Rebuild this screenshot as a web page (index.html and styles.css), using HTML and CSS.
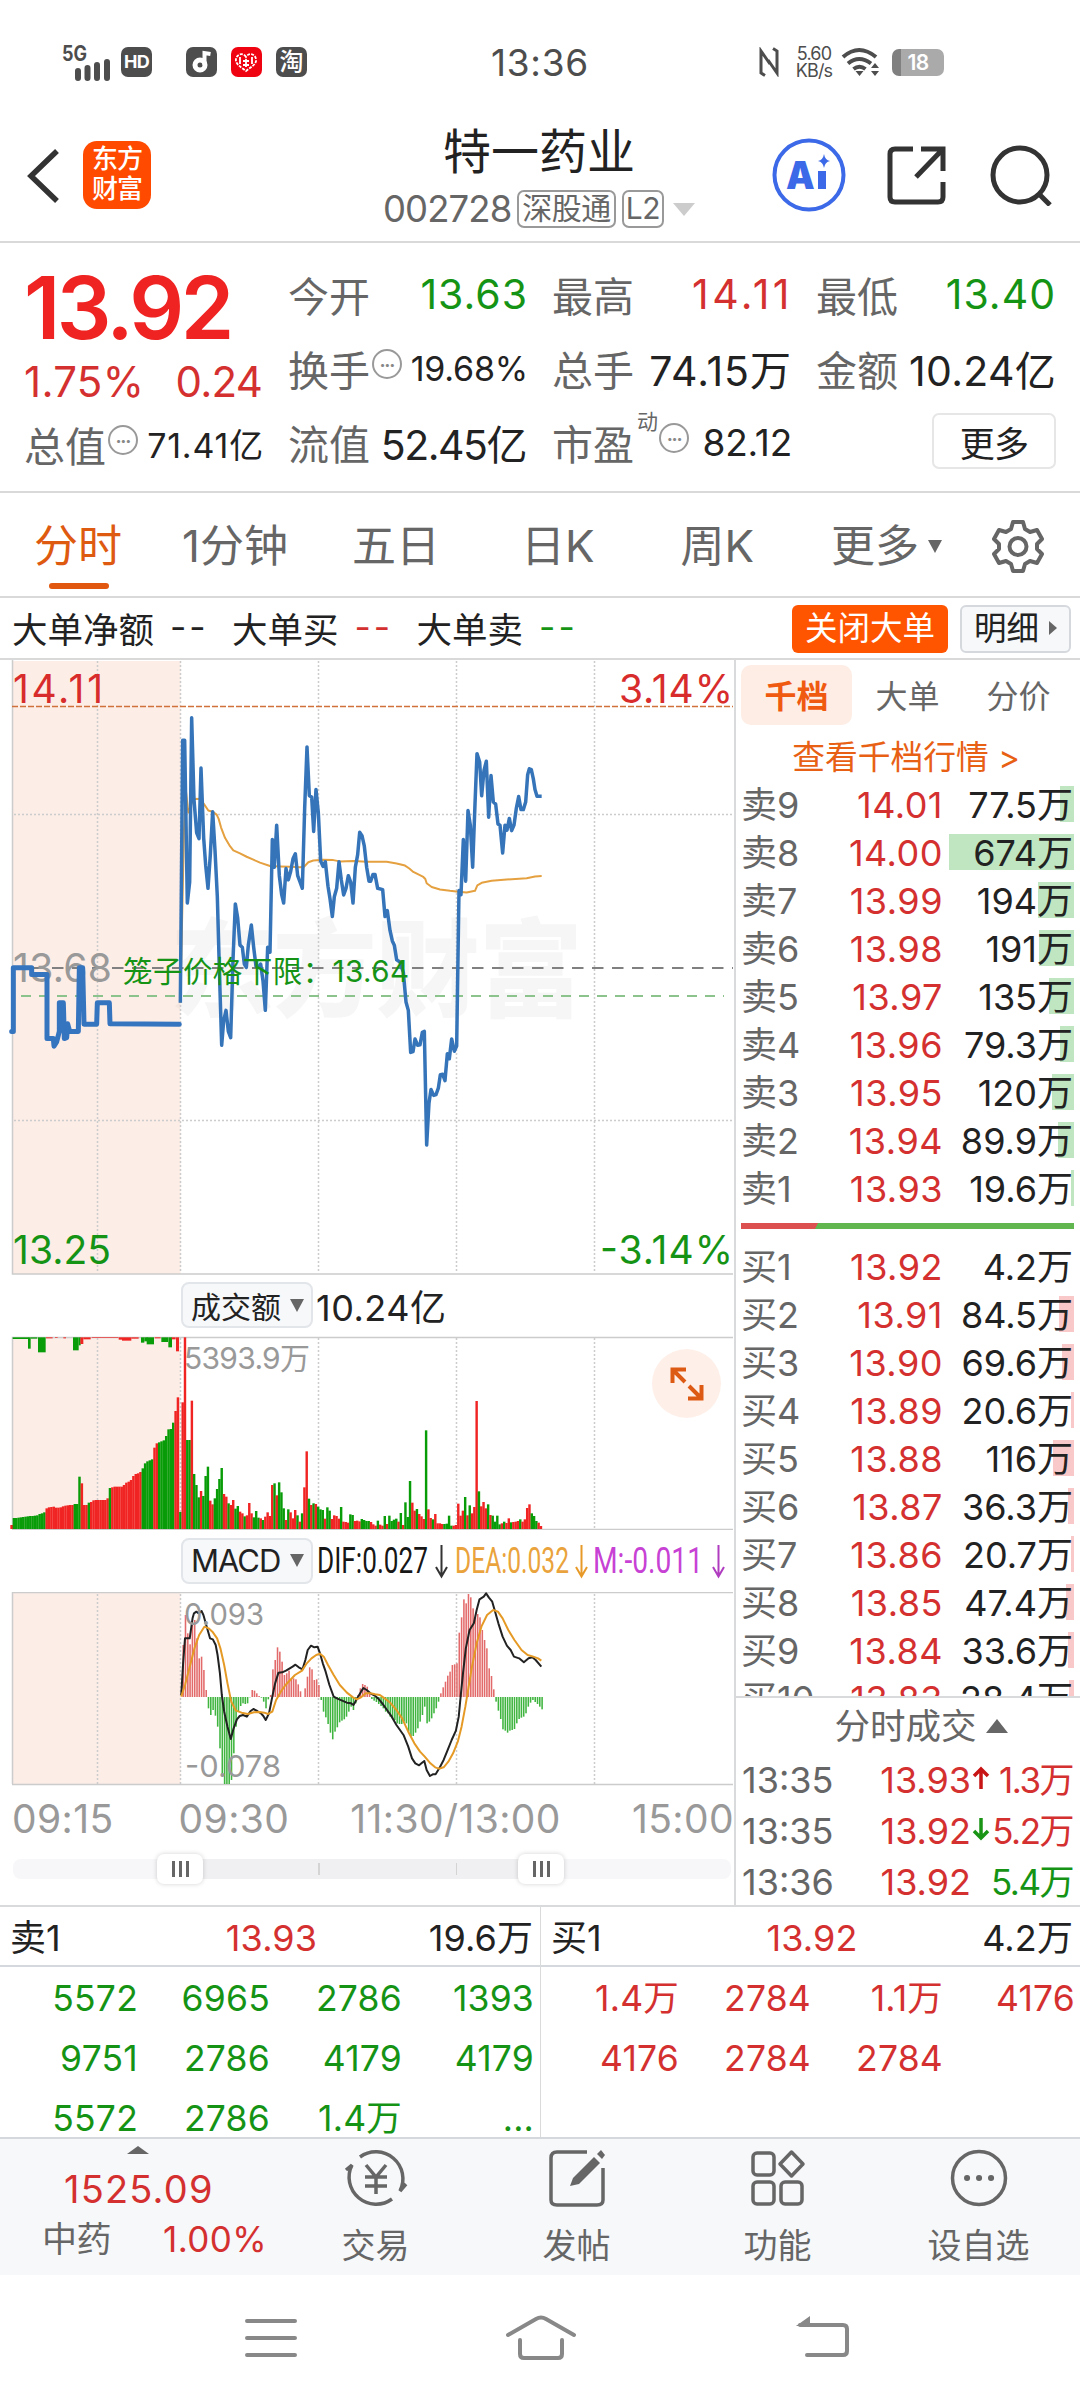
FILE: index.html
```html
<!DOCTYPE html>
<html lang="zh-CN">
<head>
  <meta charset="UTF-8" />
  <meta name="viewport" content="width=device-width, initial-scale=1.0"/>
  <title>特一药业 002728</title>
  <link rel="stylesheet" href="styles.css">
</head>
<body>
  <div class="status">
    <div class="status-left">
      <svg class="signal" width="50" height="36" viewBox="0 0 50 36">
        <text x="0" y="18" textLength="25" lengthAdjust="spacingAndGlyphs">5G</text>
        <path d="M16 35v-7M25.500 35v-10M35 35v-13M45 35v-16" stroke="#4d4d4d" stroke-width="6" stroke-linecap="round"/>
      </svg>
      <span class="badge hd">HD</span>
      <span class="badge music">
        <svg width="30" height="30" viewBox="0 0 30 30"><circle cx="14" cy="18" r="5" fill="none" stroke="#fff" stroke-width="5"/><path d="M18.500 18V6l6 1" fill="none" stroke="#fff" stroke-width="4"/></svg>
      </span>
      <span class="badge red">
        <svg width="30" height="30" viewBox="0 0 30 30" fill="none" stroke="#fff" stroke-width="1.800"><path d="M15 10c-3-5-9-3-10 2s5 8 10 12c5-4 11-7 10-12s-7-7-10-2z" stroke-dasharray="3 1.200"/><path d="M9 10v7M21 10v7M12 14h6M12 18h6M15 12v8"/></svg>
      </span>
      <span class="badge tao">淘</span>
    </div>
    <div class="clock">13:36</div>
    <div class="status-right">
      <svg width="20" height="30" viewBox="0 0 20 30" fill="none" stroke="#4d4d4d" stroke-width="3"><path d="M6 28.500 2 26V4l9 13M14 1.500 18 4v22L9 13"/></svg>
      <div class="speed"><span>5.60</span><span>KB/s</span></div>
      <svg width="40" height="30" viewBox="0 0 40 30" fill="none" stroke="#4d4d4d" stroke-width="4"><path d="M2 10Q18-4 35 10M7 16.500q11-9 23 0M12.500 22q6-4.500 12 0"/><path d="M14.500 24h8l-4 5zM30 21h8l-4-5zM30 24h8l-4 5z" fill="#4d4d4d" stroke="none"/></svg>
      <span class="battery">18</span>
    </div>
  </div>

  <div class="header">
    <div class="header-left">
      <svg width="34" height="54" viewBox="0 0 34 54"><path d="M31 2 5 27l26 25" fill="none" stroke="#333" stroke-width="5.500"/></svg>
      <div class="logo">东方<br>财富</div>
    </div>
    <div class="title">
      <h1>特一药业</h1>
      <div class="code"><span>002728</span><i>深股通</i><i>L2</i><b class="tri-down"></b></div>
    </div>
    <div class="header-right">
      <svg width="74" height="74" viewBox="0 0 74 74"><circle cx="37" cy="37" r="34.500" fill="none" stroke="#3c69e7" stroke-width="4"/><text class="ai" x="14" y="51" textLength="28" lengthAdjust="spacingAndGlyphs">A</text><path d="M50 33v18" stroke="#3c69e7" stroke-width="8"/><path d="M52 16q1 6 6 7-5 1-6 7-1-6-6-7 5-1 6-7z" fill="#3c69e7"/></svg>
      <svg width="60" height="60" viewBox="0 0 60 60" fill="none" stroke="#333" stroke-width="5"><path d="M26 4H8q-5 0-5 5v43q0 5 5 5h43q5 0 5-5V37M34 4h22v22M56 4 29 32"/></svg>
      <svg width="62" height="62" viewBox="0 0 62 62" fill="none" stroke="#333" stroke-width="5"><circle cx="30" cy="31" r="27"/><path d="m48 49 12 12"/></svg>
    </div>
  </div>

  <div class="quote">
    <div class="quote-main">
      <div class="price red-t">13.92</div>
      <div class="change red-t"><span>1.75%</span><span>0.24</span></div>
      <div class="cell total"><label>总值</label><em class="info">•••</em><span class="small">71.41亿</span></div>
    </div>
    <div class="quote-col">
      <div class="cell"><label>今开</label><span class="green-t">13.63</span></div>
      <div class="cell"><label>换手</label><em class="info">•••</em><span class="small">19.68%</span></div>
      <div class="cell"><label>流值</label><span class="tight">52.45亿</span></div>
    </div>
    <div class="quote-col">
      <div class="cell"><label>最高</label><span class="red-t wide">14.11</span></div>
      <div class="cell"><label>总手</label><span>74.15万</span></div>
      <div class="cell"><label>市盈</label><sup>动</sup><em class="info">•••</em><span class="small mid">82.12</span></div>
    </div>
    <div class="quote-col">
      <div class="cell"><label>最低</label><span class="green-t">13.40</span></div>
      <div class="cell"><label>金额</label><span class="fit">10.24亿</span></div>
      <div class="cell"><button class="more-btn">更多</button></div>
    </div>
  </div>

  <div class="tabs">
    <div class="tab active">分时</div>
    <div class="tab">1分钟</div>
    <div class="tab">五日</div>
    <div class="tab">日K</div>
    <div class="tab">周K</div>
    <div class="tab">更多<b class="tri-down"></b></div>
    <svg class="gear" width="54" height="54" viewBox="0 0 54 54" fill="none" stroke="#666" stroke-width="4"><path d="M22 3h10l2 7 5 3 7-2 5 9-5 5v5l5 5-5 9-7-2-5 3-2 7H22l-2-7-5-3-7 2-5-9 5-5v-5l-5-5 5-9 7 2 5-3z" stroke-linejoin="round"/><circle cx="27" cy="27.500" r="8.500"/></svg>
  </div>

  <div class="bigorder">
    <span>大单净额</span><span class="dash">--</span>
    <span>大单买</span><span class="dash red-t">--</span>
    <span>大单卖</span><span class="dash green-t">--</span>
    <button class="close-big">关闭大单</button>
    <button class="detail">明细<b class="tri-right"></b></button>
  </div>

  <div class="main">
    <div class="charts">
      <svg class="price-chart" width="734" height="615" viewBox="0 660 734 615">
        <rect x="12.500" y="661" width="168" height="613" fill="#fdede7"/>
        <text class="watermark" x="170" y="1008" textLength="412" lengthAdjust="spacingAndGlyphs">东方财富</text>
        <path class="grid" d="M97.500 661V1273M180.500 661V1273M318.500 661V1273M456.500 661V1273M594.500 661V1273M14 814.500H733M14 1120.500H733"/>
        <path class="frame" d="M12.500 660V1274H733"/>
        <path d="M12 706.500H733" stroke="#d0703a" stroke-width="1.500" stroke-dasharray="6 2"/>
        <path d="M12 968H733" stroke="#808080" stroke-width="2" stroke-dasharray="11.500 8.500"/>
        <path d="M21 996H724" stroke="#8cc28c" stroke-width="2" stroke-dasharray="10 8"/>
        <text class="axis-t gray" x="13" y="982" textLength="99">13.68</text>
        <g transform="translate(0 640) scale(.33333 .42087)">
          <polyline class="avg" points="541,862 552,450 558,360 565,410 572,395 580,377 600,378 612,390 625,405 638,408 650,415 656,425 663,445 675,470 690,490 700,500 720,507 740,515 760,522 780,529 810,537 840,538 870,539 900,540 912,539 925,528 940,524 970,522 1000,523 1020,526 1060,525 1100,527 1160,527 1190,531 1215,536 1228,543 1240,551 1270,563 1276,568 1280,578 1295,587 1320,593 1350,596 1375,598 1400,600 1425,596 1432,583 1445,577 1475,572 1520,569 1580,566 1605,562 1625,561"/>
          <polyline class="pre" points="35,930 40,930 40,779 95,779 95,795 141,795 141,947 160,947 162,965 170,955 178,930 178,862 190,862 193,947 200,945 203,912 209,930 235,930 238,779 248,779 252,913 290,913 292,862 328,862 330,912 538,913"/>
          <polyline class="last" points="541,862 548,238 554,238 562,625 569,575 575,185 582,380 590,458 597,472 603,304 611,470 617,535 624,590 631,510 638,408 645,500 652,610 658,780 665,963 671,905 678,880 685,930 692,945 699,760 706,627 713,660 720,725 727,730 733,770 739,778 745,725 754,677 761,730 768,775 775,778 782,770 789,810 796,880 803,730 810,742 817,474 823,540 830,440 838,560 845,605 851,625 858,543 865,570 872,550 879,520 886,508 893,560 900,575 907,590 914,400 921,254 928,370 935,373 941,455 948,355 955,410 962,525 969,538 976,527 984,585 990,615 997,657 1003,610 1010,590 1017,527 1024,570 1031,606 1038,590 1045,560 1052,575 1059,625 1066,540 1073,510 1079,457 1086,465 1093,490 1100,540 1107,573 1112,573 1119,557 1125,557 1133,590 1148,593 1155,657 1162,643 1170,690 1177,715 1183,725 1190,760 1200,765 1210,790 1218,860 1225,880 1232,980 1239,978 1245,948 1253,963 1260,962 1267,932 1273,930 1280,1200 1287,1100 1293,1068 1301,1082 1308,1080 1315,1065 1321,1033 1328,1032 1335,1047 1342,983 1348,995 1355,948 1363,977 1370,965 1377,595 1383,605 1390,474 1397,573 1404,405 1411,440 1418,540 1425,390 1431,270 1439,290 1445,370 1452,310 1459,288 1466,421 1473,322 1480,385 1487,390 1494,437 1500,440 1508,506 1515,440 1521,452 1528,424 1535,453 1542,440 1549,400 1556,372 1563,403 1570,403 1577,385 1583,320 1588,306 1594,308 1600,330 1605,355 1611,371 1625,371"/>
        </g>
        <text class="limit" x="123" y="982" textLength="286">笼子价格下限：13.64</text>
        <text class="axis-t up" x="13" y="703" textLength="90">14.11</text>
        <text class="axis-t up" x="619" y="703" textLength="114">3.14%</text>
        <text class="axis-t down" x="13" y="1264" textLength="98">13.25</text>
        <text class="axis-t down" x="600" y="1264" textLength="133">-3.14%</text>
      </svg>

      <div class="legend">
        <span class="chip">成交额<b class="tri-down"></b></span>
        <span class="legend-val">10.24亿</span>
      </div>

      <div class="vol-wrap">
        <svg width="734" height="194" viewBox="0 1336 734 194">
          <rect x="12.500" y="1337" width="168" height="192" fill="#fdede7"/>
          <path class="grid" d="M97.500 1338V1529M180.500 1338V1529M318.500 1338V1529M456.500 1338V1529M594.500 1338V1529"/>
          <path class="frame" d="M12.500 1529V1337.500H733M12 1529.500H733"/>
          <text class="scale-t" x="184" y="1369" textLength="126">5393.9万</text>
          <g id="volume" transform="translate(0 1260) scale(.33333)"></g>
        </svg>
        <span class="expand">
          <svg width="36" height="36" viewBox="0 0 36 36" fill="none" stroke="#dd5a14" stroke-width="4"><path d="M17 3.500H3.500V17M4 4l12 12M19 32.500h13.500V19M32 32 20 20"/></svg>
        </span>
      </div>

      <div class="legend macd">
        <span class="chip">MACD<b class="tri-down"></b></span>
        <svg width="418" height="48" viewBox="316 1537 418 48">
          <g class="macd-t">
            <text x="317" y="1573" textLength="111" lengthAdjust="spacingAndGlyphs">DIF:0.027</text>
            <text x="455" y="1573" textLength="114" lengthAdjust="spacingAndGlyphs" fill="#e89a28">DEA:0.032</text>
            <text x="593" y="1573" textLength="110" lengthAdjust="spacingAndGlyphs" fill="#c22fd0">M:-0.011</text>
          </g>
          <g fill="none" stroke-width="2">
            <path d="M441.500 1545v31m-5.500-9 5.500 9.500 5.500-9.500" stroke="#333"/>
            <path d="M581.500 1545v31m-5.500-9 5.500 9.500 5.500-9.500" stroke="#e89a28"/>
            <path d="M718.500 1545v31m-5.500-9 5.500 9.500 5.500-9.500" stroke="#b03cc0"/>
          </g>
        </svg>
      </div>

      <svg class="macd-chart" width="734" height="194" viewBox="0 1592 734 194">
        <rect x="12.500" y="1592" width="168" height="192" fill="#fdede7"/>
        <path class="grid" d="M97.500 1594V1784M180.500 1594V1784M318.500 1594V1784M456.500 1594V1784M594.500 1594V1784"/>
        <path class="frame" d="M12.500 1784V1592.500H733M12 1784.500H733"/>
        <g transform="translate(0 1530) scale(.47195 .33333)">
          <g id="macd"></g>
          <polyline class="dif" points="384,495 388,400 392,325 402,325 408,265 411,250 416,245 421,250 427,243 431,255 438,290 445,325 451,328 457,345 461,375 466,430 470,495 475,545 482,590 489,627 495,595 502,568 508,558 515,555 523,560 531,543 537,537 545,543 553,550 558,558 563,570 570,550 577,500 583,460 590,428 598,427 606,422 614,415 620,410 626,404 633,412 641,418 647,390 652,360 659,347 666,352 673,350 678,370 684,400 690,425 698,465 707,500 715,506 725,512 735,518 744,520 749,525 757,505 765,485 770,474 777,480 785,490 795,498 803,508 810,520 820,540 830,560 840,585 855,615 865,650 873,685 880,700 888,706 893,700 899,693 904,720 911,738 917,733 923,733 932,712 940,690 948,662 957,630 966,602 972,560 976,500 981,430 987,355 995,300 1004,280 1010,240 1016,208 1025,200 1030,190 1036,203 1043,215 1048,240 1056,280 1065,320 1074,347 1082,360 1089,380 1100,385 1110,397 1120,385 1128,382 1135,390 1147,410"/>
          <polyline class="dea" points="384,500 392,465 403,405 412,355 422,315 433,290 442,295 450,305 460,325 467,355 475,405 482,460 490,515 500,542 512,548 525,552 538,547 550,546 560,548 568,552 577,545 585,510 595,485 605,465 615,450 625,435 640,422 650,400 660,385 670,375 678,371 686,380 695,405 707,435 720,465 735,488 748,502 756,508 765,502 775,490 785,490 795,493 805,495 815,505 828,520 840,540 852,565 865,605 878,640 890,665 900,680 912,700 922,712 930,716 940,712 950,695 960,670 970,635 978,590 986,530 993,470 1000,410 1010,340 1020,290 1032,255 1045,240 1055,245 1065,265 1077,300 1090,330 1105,360 1118,375 1130,380 1140,385 1147,392"/>
        </g>
        <text class="scale-t" x="184" y="1625" textLength="80" lengthAdjust="spacingAndGlyphs">0.093</text>
        <text class="scale-t" x="185" y="1777" textLength="96" lengthAdjust="spacingAndGlyphs">-0.078</text>
      </svg>

      <div class="times"><span>09:15</span><span>09:30</span><span>11:30/13:00</span><span>15:00</span></div>
      <div class="slider">
        <div class="slider-range"><i></i><i></i></div>
        <span class="handle left"></span>
        <span class="handle right"></span>
      </div>
    </div>

    <div class="side">
      <div class="side-tabs"><span class="active">千档</span><span>大单</span><span>分价</span></div>
      <div class="side-link">查看千档行情 &gt;</div>
      <div class="book" id="sell"></div>
      <div class="ratio"></div>
      <div class="book buy" id="buy"></div>
      <div class="deals">
        <div class="deals-title">分时成交<b class="tri-up"></b></div>
        <div class="deal"><span>13:35</span><span class="red-t">13.93</span><svg width="18" height="24" viewBox="0 0 18 24"><path d="M9 23V3M2 10l7-7 7 7" stroke="#c81414"/></svg><span class="red-t amt">1.3万</span></div>
        <div class="deal"><span>13:35</span><span class="red-t">13.92</span><svg width="18" height="24" viewBox="0 0 18 24"><path d="M9 1v20M2 14l7 7 7-7" stroke="#1a9414"/></svg><span class="red-t amt">5.2万</span></div>
        <div class="deal"><span>13:36</span><span class="red-t">13.92</span><svg width="18" height="24"></svg><span class="green-t amt">5.4万</span></div>
      </div>
    </div>
  </div>

  <div class="queue">
    <div class="queue-half">
      <div class="queue-head"><span>卖1</span><span class="red-t">13.93</span><span>19.6万</span></div>
      <div class="queue-grid green-t">
        <span>5572</span><span>6965</span><span>2786</span><span>1393</span>
        <span>9751</span><span>2786</span><span>4179</span><span>4179</span>
        <span>5572</span><span>2786</span><span>1.4万</span><span>...</span>
      </div>
    </div>
    <div class="queue-half">
      <div class="queue-head"><span>买1</span><span class="red-t">13.92</span><span>4.2万</span></div>
      <div class="queue-grid red-t">
        <span>1.4万</span><span>2784</span><span>1.1万</span><span>4176</span>
        <span>4176</span><span>2784</span><span>2784</span>
      </div>
    </div>
  </div>

  <div class="toolbar">
    <div class="index">
      <b class="tri-up"></b>
      <div class="index-val red-t">1525.09</div>
      <div class="index-row"><span>中药</span><span class="red-t">1.00%</span></div>
    </div>
    <div class="tool">
      <svg width="66" height="60" viewBox="0 0 66 60"><path d="M17 9A27 27 0 0 1 57 43l6-7M49 51A27 27 0 0 1 9 17L3 22M23 17l10 12 10-12M33 29v17M22 29h22M22 38h22"/></svg>
      <span>交易</span>
    </div>
    <div class="tool">
      <svg width="60" height="60" viewBox="0 0 60 60"><path d="M40 4H10q-6 0-6 6v42q0 5 6 5h40q6 0 6-5V20"/><path d="m23 38 3-8L47 9l6 6-21 21z" fill="#666" stroke="none"/><path d="m50 6 4-4 4 5-3 4z" fill="#666" stroke="none"/></svg>
      <span>发帖</span>
    </div>
    <div class="tool">
      <svg width="60" height="60" viewBox="0 0 60 60"><rect x="5" y="5" width="21" height="22" rx="4"/><rect x="5" y="34" width="21" height="22" rx="4"/><rect x="33" y="34" width="21" height="22" rx="4"/><path d="m43.500 4 11.500 12-11.500 12L32 16z" stroke-linejoin="round"/></svg>
      <span>功能</span>
    </div>
    <div class="tool">
      <svg width="60" height="60" viewBox="0 0 60 60"><circle cx="30" cy="30" r="26.500"/><path d="M18 30h.1M30 30h.1M42 30h.1" stroke-width="6" stroke-linecap="round"/></svg>
      <span>设自选</span>
    </div>
  </div>

  <div class="navbar">
    <svg width="52" height="44" viewBox="0 0 52 44"><path d="M2 5h48M2 22h48M2 39h48"/></svg>
    <svg class="home" width="72" height="46" viewBox="0 0 72 46"><path d="M3 20 31 4q5-3 10 0l28 16M15 25v14q0 4 4 4h34q4 0 4-4V25"/></svg>
    <svg width="54" height="44" viewBox="0 0 54 44"><path d="M5 9h43q4 0 4 4v22q0 4-4 4H12"/><path d="M4 9 14 2v7z" fill="#888" stroke-width="2"/></svg>
  </div>

  <script>
    const sell = [
      ["卖9", "14.01", "77.5万", 14], ["卖8", "14.00", "674万", 125], ["卖7", "13.99", "194万", 36],
      ["卖6", "13.98", "191万", 35], ["卖5", "13.97", "135万", 25], ["卖4", "13.96", "79.3万", 14],
      ["卖3", "13.95", "120万", 22], ["卖2", "13.94", "89.9万", 16], ["卖1", "13.93", "19.6万", 3]
    ];
    const buy = [
      ["买1", "13.92", "4.2万", 0], ["买2", "13.91", "84.5万", 15], ["买3", "13.90", "69.6万", 12],
      ["买4", "13.89", "20.6万", 3], ["买5", "13.88", "116万", 21], ["买6", "13.87", "36.3万", 6],
      ["买7", "13.86", "20.7万", 3], ["买8", "13.85", "47.4万", 8], ["买9", "13.84", "33.6万", 6],
      ["买10", "13.83", "28.4万", 5]
    ];

    function fillBook(id, rows) {
      document.getElementById(id).innerHTML = rows.map(r =>
        `<div class="order"><span>${r[0]}</span><span class="red-t">${r[1]}</span><span class="amt">${r[2]}</span><i style="width:${r[3]}px"></i></div>`
      ).join("");
    }
    fillBook("sell", sell);
    fillBook("buy", buy);

    // r/g = colour, number = top of the bar
    const preVol = "g774 g774 g773 g772 g771 g770 g769 g768 g768 g767 g766 g762 g760 g757 r745 r742 r741 r740 r743 r743 r742 r739 r737 r736 r735 r735 g732 g732 g650 r670 r735 r735 g728 r726 r721 r720 r720 r720 r720 r720 r715 g684 r682 r680 r680 r680 r680 r675 r668 r665 r660 r648 r642 r640 r636 g625 g610 g604 g601 g598 r563 r550 g547 g544 g541 g528 g508 g507 g488 r453 r412";
    const vol = "g756 r427 r232 g540 g540 r422 g642 g675 g712 r693 g708 g648 g620 r722 r733 g715 g687 g657 g624 r702 r710 g730 r735 r720 g746 g738 r755 r760 g769 r766 r729 r760 g772 g753 g773 r775 g780 r770 r757 r768 r675 g670 r706 g667 g697 g745 r780 g748 r757 r775 r750 g766 r785 g760 r682 r574 g716 r735 g730 r732 g740 g748 g750 r776 g742 g752 r777 r766 r768 r776 g741 r785 r786 r788 g763 g765 r783 r782 r784 g777 g780 g783 g783 r786 r793 r797 g782 r794 r797 g768 r792 g767 g783 g779 g776 r785 g759 r795 g727 g771 g663 r728 r752 g747 r762 r769 r777 g511 r748 r774 g778 r762 r790 r790 r792 g792 g791 g767 g797 r797 r795 r731 r767 r752 g711 r766 g736 r760 r741 r423 g694 r739 r726 r745 g733 r765 g767 g785 g767 g793 r790 g785 r789 r775 g787 r786 r785 r783 g778 r785 r778 r744 r733 g760 g768 g783 r788 r798";
    const match = [["g",38,47,237],["g",84,8,266],["g",92,20,236],["g",114,23,277],["r",138,20,235],["r",165,8,234],["r",190,8,235],["g",219,17,271],["g",236,6,256],["r",241,9,252],["r",250,22,238],["r",275,80,234],["r",356,10,239],["r",366,28,242],["r",394,22,236],["g",423,10,248],["g",433,10,244],["g",440,22,253],["r",464,18,235],["g",484,20,246],["g",505,11,262],["r",515,12,238],["r",528,9,274]];
    const fills = { r: "#f02423", g: "#089c08" };
    const bar = (x, y, w, h, c) => `<rect x="${x.toFixed(1)}" y="${y}" width="${w}" height="${h}" fill="${c}"/>`;

    function bars(str, x0, step) {
      return str.split(" ").map((b, i) => {
        const top = +b.slice(1);
        return bar(x0 + i * step, top, step + 0.4, 807 - top, fills[b[0]]);
      }).join("");
    }
    document.getElementById("volume").innerHTML =
      bar(31, 795, 8, 12, fills.r) + bars(preVol, 38, 7.03) + bars(vol, 537.5, 6.89) +
      match.map(m => bar(m[1], 232, m[2], m[3] - 232, fills[m[0]])).join("");

    const hist = [345,255,310,343,285,270,325,385,380,420,480,535,555,540,557,590,655,735,762,762,762,750,670,590,545,528,520,522,520,502,480,482,490,498,503,515,535,508,495,418,390,352,365,395,435,430,422,447,445,448,463,484,501,475,440,412,418,450,448,465,510,545,562,582,608,628,605,592,577,572,568,560,545,530,540,520,495,475,462,465,470,490,507,512,516,522,528,535,545,550,560,565,570,580,582,582,575,580,605,620,618,608,595,575,555,530,580,575,565,550,535,515,490,472,455,437,425,405,403,400,308,262,208,220,192,202,235,262,252,262,300,330,355,415,438,478,515,542,567,598,602,608,602,600,597,580,567,563,560,550,530,518,510,516,522,530,538];
    document.getElementById("macd").innerHTML = hist.map((v, i) =>
      bar(386.5 + i * 4.875, Math.min(v, 501), 3.3, Math.abs(v - 501), v < 501 ? "#e36a6a" : "#3fb53f")
    ).join("");
  </script>
</body>
</html>
```
FILE: styles.css
```css
* {
  box-sizing: border-box;
}

body {
  margin: 0;
  width: 1080px;
  height: 2400px;
  overflow: hidden;
  background: #fff;
  color: #222;
  font-family: Inter, "Noto Sans CJK SC", sans-serif;
  font-size: 36px;
  letter-spacing: -0.02em;
}

i, em { font-style: normal; }

button {
  font-family: inherit;
  letter-spacing: inherit;
  padding: 0;
}

.red-t { color: #d43030; }
.green-t { color: #159315; }

.tri-down, .tri-up, .tri-right {
  display: inline-block;
  width: 0;
  height: 0;
  border: 7px solid transparent;
}
.tri-down { border-top: 13px solid #666; border-bottom: 0; }
.tri-up { border-bottom: 13px solid #666; border-top: 0; }
.tri-right { border-left: 8px solid #666; border-right: 0; }

/* status bar */
.status {
  height: 124px;
  display: grid;
  grid-template-columns: 1fr 100px 1fr;
  align-items: center;
  color: #4d4d4d;
}
.status-left, .status-right {
  display: flex;
  align-items: center;
}
.status-left { padding-left: 62px; }
.signal { margin-right: 9px; margin-top: -3px; overflow: visible; }
.signal text { font-size: 21px; font-weight: 700; fill: #4d4d4d; letter-spacing: 0; }
.badge {
  width: 31px;
  height: 30px;
  border-radius: 7px;
  background: #4d4d4d;
  color: #fff;
  font-size: 18px;
  font-weight: 700;
  line-height: 30px;
  text-align: center;
  margin-right: 14px;
}
.badge svg { display: block; }
.hd { margin-right: 34px; }
.red { background: #f00310; }
.tao { font-size: 24px; font-weight: 500; letter-spacing: 0; }
.clock { text-align: center; font-size: 37px; letter-spacing: 0.7px; }
.status-right { padding-left: 169px; }
.speed {
  display: flex;
  flex-direction: column;
  width: 42px;
  margin: 0 6px 0 14px;
  text-align: center;
  font-size: 18px;
  line-height: 17px;
  letter-spacing: -0.8px;
}
.battery {
  width: 52px;
  height: 27px;
  margin-left: 11px;
  border-radius: 7px;
  background: linear-gradient(90deg, #808080 9px, #aaa 9px);
  color: #fff;
  font-size: 21px;
  font-weight: 600;
  line-height: 27px;
  text-align: center;
}

/* header */
.header {
  height: 119px;
  padding: 0 28px 0 26px;
  display: flex;
  justify-content: space-between;
  border-bottom: 2px solid #d9d9d9;
}
.header-left { width: 300px; display: flex; align-items: center; padding-bottom: 15px; }
.header-left svg { margin-bottom: -1px; }
.logo {
  width: 68px;
  height: 68px;
  margin-left: 23px;
  border-radius: 14px;
  background: #ff4a00;
  color: #fff;
  font-size: 26px;
  font-weight: 500;
  line-height: 30px;
  padding-top: 3px;
  text-align: center;
  letter-spacing: -1px;
}
.title { width: 320px; text-align: center; }
.title h1 { margin: 0; font-size: 48px; font-weight: 400; line-height: 56px; letter-spacing: 0; }
.code {
  display: flex;
  justify-content: center;
  align-items: center;
  gap: 6px;
  height: 38px;
  margin-top: 10px;
  color: #666;
}
.code span { font-size: 36.500px; letter-spacing: -0.9px; }
.code i {
  height: 38px;
  padding: 0 3px;
  border: 2px solid #999;
  border-radius: 7px;
  font-size: 30px;
  line-height: 33px;
  letter-spacing: -0.5px;
}
.code i + i { padding: 0 2px; }
.code .tri-down { border-width: 13px 11px 0; border-top-color: #ccc; margin-left: 3px; }
.header-right { width: 300px; display: flex; align-items: center; justify-content: flex-end; padding-bottom: 15px; }
.header-right svg:nth-child(2) { margin: 0 43px 0 41px; }
.ai { font-size: 38px; font-weight: 900; fill: #3c69e7; }

/* quote */
.quote {
  height: 250px;
  display: flex;
  gap: 26px;
  padding: 14px 26px 0 24px;
  border-bottom: 2px solid #d9d9d9;
}
.quote-main, .quote-col { width: 238px; flex: none; }
.price {
  height: 87px;
  padding-top: 14px;
  font-size: 86px;
  font-weight: 600;
  line-height: 74px;
  letter-spacing: -3.500px;
  color: #f02323;
}
.change {
  height: 74px;
  display: flex;
  justify-content: space-between;
  align-items: center;
  font-size: 42px;
  letter-spacing: 0.3px;
}
.change span + span { letter-spacing: -0.8px; }
.cell {
  height: 74px;
  display: flex;
  align-items: center;
  font-size: 41px;
  white-space: nowrap;
}
.cell label { color: #666; letter-spacing: 0; }
.cell > span { margin-left: auto; margin-right: -2px; letter-spacing: 1px; }
.cell > .tight { letter-spacing: -1.500px; margin-right: 0; }
.cell > .wide { letter-spacing: 3.500px; margin-right: -3px; }
.cell > .fit { letter-spacing: 0.3px; }
.cell > .small { font-size: 34px; letter-spacing: -0.2px; }
.total > .small { letter-spacing: 0.8px; }
.cell > .mid { font-size: 37px; }
.total { height: 51px; }
.info {
  width: 30px;
  height: 30px;
  margin: -8px 0 0 2px;
  border: 2px solid #999;
  border-radius: 50%;
  color: #888;
  font-size: 10px;
  line-height: 26px;
  text-align: center;
}
.cell sup { font-size: 21px; color: #666; align-self: flex-start; line-height: 30px; margin: 2px 0 0 3px; }
.more-btn {
  width: 124px;
  height: 56px;
  margin: -2px -2px 0 auto;
  border: 2px solid #e6e6e6;
  border-radius: 7px;
  background: #fff;
  color: #222;
  font-size: 35px;
}

/* period tabs */
.tabs {
  height: 105px;
  display: flex;
  align-items: center;
  padding: 2px 36px 0 34px;
  border-bottom: 2px solid #d9d9d9;
  color: #666;
  font-size: 44px;
  letter-spacing: 0;
}
.tab { line-height: 104px; margin-right: 60px; position: relative; white-space: nowrap; }
.tab:nth-child(2) { margin-right: 64px; }
.tab:nth-child(3) { margin-right: 81px; }
.tab:nth-child(4) { margin-right: 86px; }
.tab:nth-child(5) { margin-right: 77px; }
.tab:nth-child(6) { margin-right: auto; }
.tab.active { color: #de5a10; }
.tab.active::after {
  content: "";
  position: absolute;
  left: 15px;
  bottom: 9px;
  width: 60px;
  height: 6px;
  border-radius: 3px;
  background: #e2570f;
}
.tab .tri-down { margin-left: 9px; vertical-align: 9px; }
.gear { margin-right: -1px; }

/* big orders */
.bigorder {
  height: 62px;
  display: flex;
  align-items: center;
  padding: 0 9px 0 12px;
  border-bottom: 2px solid #d9d9d9;
  font-size: 35.500px;
  letter-spacing: 0;
  white-space: nowrap;
}
.bigorder > span { padding-bottom: 2px; }
.dash { width: 50px; margin: 0 12px 0 16px; letter-spacing: 3px; }
.close-big, .detail {
  height: 48px;
  margin-top: 1px;
  border: 0;
  border-radius: 6px;
  font-size: 32.500px;
  letter-spacing: 0;
  line-height: 46px;
}
.close-big { width: 156px; margin-left: auto; background: #ff5500; color: #fff; }
.detail { width: 111px; margin-left: 12px; background: #f7f8fa; border: 2px solid #d5d9dd; color: #222; line-height: 42px; }
.detail .tri-right { margin-left: 10px; vertical-align: 5px; }

/* charts */
.main { display: flex; height: 1247px; border-bottom: 2px solid #d9dadb; }
.charts { width: 734px; height: 1245px; }
.charts > svg, .vol-wrap > svg { display: block; }
.grid { fill: none; stroke: #ccc; stroke-width: 1.500; stroke-dasharray: 2 2; }
.frame { fill: none; stroke: #ccc; stroke-width: 1.500; }
.watermark { font-size: 106px; font-weight: 900; fill: #888; opacity: 0.07; }
.axis-t { font-size: 39px; letter-spacing: 0; }
.gray { fill: #999; }
.up { fill: #d82c2c; }
.down { fill: #159315; }
.limit { font-size: 29.500px; fill: #159315; letter-spacing: 0; }
.scale-t { font-size: 30px; fill: #999; letter-spacing: 0; }
polyline { fill: none; vector-effect: non-scaling-stroke; stroke-linejoin: round; }
.avg { stroke: #e5a040; stroke-width: 2; }
.last { stroke: #3574b8; stroke-width: 3.500; }
.pre { stroke: #3574bf; stroke-width: 5; stroke-linecap: round; }
.dif { stroke: #222; stroke-width: 2; }
.dea { stroke: #e69a26; stroke-width: 2; }

.legend { height: 61px; display: flex; align-items: center; padding-left: 181px; padding-bottom: 1px; }
.legend.macd { height: 62px; }
.chip {
  width: 132px;
  height: 46px;
  border: 2px solid #e2e5e9;
  border-radius: 8px;
  background: #f7f8fa;
  display: flex;
  align-items: center;
  justify-content: space-between;
  padding: 0 7px 0 8px;
  font-size: 30px;
  letter-spacing: 0;
}
.macd .chip { font-size: 31px; letter-spacing: -1px; }
.macd svg { margin-left: 3px; }
.legend-val { margin-left: 3px; font-size: 36px; letter-spacing: 0.5px; }
.macd-t text { font-family: Roboto, sans-serif; font-size: 36px; letter-spacing: 0; fill-opacity: 0.92; }
.vol-wrap { position: relative; }
.expand {
  position: absolute;
  left: 652px;
  top: 13px;
  width: 69px;
  height: 69px;
  border-radius: 50%;
  background: #fef0e9;
  display: grid;
  place-items: center;
}
.times { height: 64px; display: flex; align-items: center; padding: 0 0 0 12px; font-size: 39px; color: #999; letter-spacing: 0.4px; }
.times span:nth-child(2) { margin-left: 65px; }
.times span:nth-child(3) { margin-left: 61px; }
.times span:nth-child(4) { margin-left: auto; }
.slider {
  position: relative;
  width: 718px;
  height: 20px;
  margin: 9px 0 0 13px;
  border-radius: 8px;
  background: #f7f7f9;
}
.slider-range { width: 360px; height: 20px; margin-left: 167px; background: #f0f0f2; display: flex; align-items: center; gap: 136px; padding-left: 138px; }
.slider-range i { width: 1.500px; height: 12px; background: #d4d4d4; }
.handle {
  position: absolute;
  top: -5px;
  width: 46px;
  height: 30px;
  border-radius: 7px;
  background: linear-gradient(90deg, #666 3px, transparent 3px 7px, #666 7px 10px, transparent 10px 14px, #666 14px) 15px 7px / 17px 16px no-repeat #fff;
  box-shadow: 0 0 5px rgba(0, 0, 0, 0.18);
}
.handle.left { left: 144px; }
.handle.right { left: 505px; }

/* order book */
.side { width: 346px; border-left: 2px solid #d9dadb; padding: 5px 6px 0 5px; }
.side-tabs { display: flex; height: 60px; font-size: 32px; color: #666; letter-spacing: 0; }
.side-tabs span { width: 111px; text-align: center; line-height: 64px; }
.side-tabs .active { color: #f05a10; font-weight: 700; background: #fdede5; border-radius: 10px; }
.side-link { height: 56px; line-height: 65px; margin-left: -3px; text-align: center; color: #e86014; font-size: 32.800px; letter-spacing: 0; }
.book { overflow: hidden; }
.order {
  position: relative;
  height: 48px;
  line-height: 48px;
  display: grid;
  grid-template-columns: 70px 132px 130px;
  white-space: nowrap;
  letter-spacing: 0.5px;
}
.order span { z-index: 1; text-align: right; }
.order span:first-child { text-align: left; color: #666; font-size: 36px; letter-spacing: 0; }
.order .amt { font-size: 36px; letter-spacing: 0; }
.order i { position: absolute; right: 0; top: 5px; height: 36px; background: #bfe6c1; }
.buy .order i { background: #f9c8c8; }
.ratio { height: 6px; margin: 10px 0 14px; background: linear-gradient(120deg, #dc5050 67px, #62b650 67px); }
.buy { height: 453px; }
.deals { margin: 0 -6px 0 -5px; border-top: 2px solid #d9dadb; padding: 0 8px 0 6px; }
.deals-title { height: 57px; line-height: 58px; font-size: 35.500px; color: #666; text-align: center; letter-spacing: 0; padding-left: 28px; }
.deals-title .tri-up { border-width: 0 11px 14px; margin-left: 9px; vertical-align: 6px; }
.deal {
  height: 51px;
  display: grid;
  grid-template-columns: 108px 121px 22px 80px;
  align-items: center;
  justify-items: end;
  letter-spacing: 0;
  line-height: 51px;
  white-space: nowrap;
}
.deal span:first-child { color: #666; justify-self: start; }
.deal .amt { font-size: 35px; letter-spacing: -1.500px; }
.deal svg { fill: none; stroke-width: 3.500; margin: -6px 3px 0 0; }

/* best bid / ask queue */
.queue { display: flex; height: 232px; border-bottom: 2px solid #d5d9dd; }
.queue-half { width: 540px; }
.queue-half + .queue-half { border-left: 1px solid #d9dadb; }
.queue-head {
  height: 60px;
  line-height: 62px;
  display: grid;
  grid-template-columns: 1fr 100px 1fr;
  padding: 0 7px 0 10px;
  border-bottom: 2px solid #d5d9dd;
  letter-spacing: 0.1px;
}
.queue-head span:nth-child(2) { text-align: center; }
.queue-head span:nth-child(3) { text-align: right; }
.queue-grid { display: grid; grid-template-columns: 138px repeat(3, 132px); padding-top: 2px; text-align: right; line-height: 60px; font-size: 35.500px; letter-spacing: 0.2px; }

/* toolbar */
.toolbar { height: 136px; display: flex; background: #f7f8fa; }
.index { width: 275px; padding: 5px 2px 0 35px; display: flex; flex-direction: column; }
.index .tri-up { border-width: 0 11px 8px; margin: 2px 0 0 92px; align-self: flex-start; }
.index-val { margin: 12px 0 0 29px; line-height: 46px; font-size: 38px; letter-spacing: 1.200px; }
.index-row { display: flex; justify-content: space-between; padding: 0 6px 0 7px; line-height: 62px; font-size: 35px; letter-spacing: 0.4px; margin-top: -4px; }
.index-row span:first-child { color: #666; letter-spacing: -0.5px; }
.tool { width: 201px; display: flex; flex-direction: column; align-items: center; padding-top: 9px; color: #666; font-size: 34px; letter-spacing: 0; line-height: 50px; }
.tool svg { fill: none; stroke: #666; stroke-width: 3.500; flex: none; margin-bottom: 13px; }

.navbar { height: 125px; padding: 0 231px 0 245px; display: flex; justify-content: space-between; align-items: center; }
.navbar svg { fill: none; stroke: #888; stroke-width: 4; stroke-linecap: round; }
.navbar .home { margin: 0 5px 0 -5px; }
```
